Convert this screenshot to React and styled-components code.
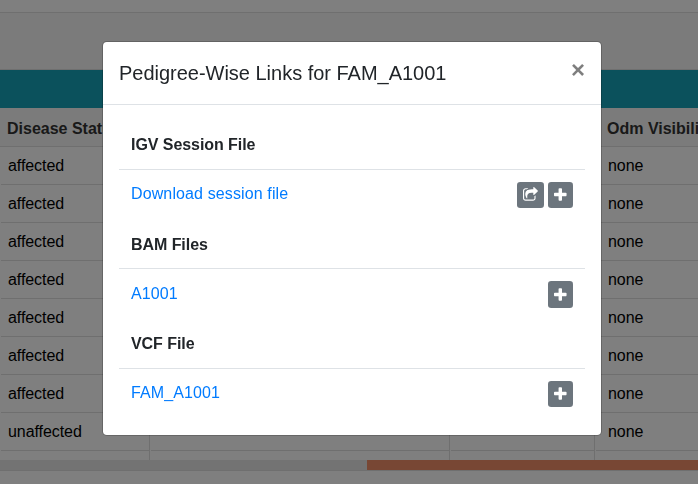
import React from "react";
import styled, { createGlobalStyle } from "styled-components";

const GlobalStyle = createGlobalStyle`
  *, *::before, *::after { box-sizing: border-box; }
  body {
    margin: 0;
    overflow: hidden;
    background: #fff;
    color: #212529;
    font: 16px/1.5 "Liberation Sans", Arial, sans-serif;
  }
`;

const Page = styled.main`
  height: 484px;
  overflow: hidden;
`;

const TopStrip = styled.div`
  height: 13px;
  border-bottom: 1px solid #dfdfdf;
`;

const Toolbar = styled.div`
  height: 57px;
  background: #f7f7f7;
  border-bottom: 1px solid #dedede;
`;

const GroupHeader = styled.div`
  height: 38px;
  background: #17a2b8;
`;

const GridRow = styled.div`
  display: grid;
  grid-template-columns: 150px 300px 145px 160px;
  height: ${(p) => p.$height || 38}px;
`;

const HeaderRow = styled(GridRow)`
  height: 39px;
  background: #f7f7f7;
  border-bottom: 1px solid #dedede;
`;

const HeaderCell = styled.div`
  padding: 9px 0 0 ${(p) => p.$indent || 7}px;
  font-weight: 700;
  color: #333;
  white-space: nowrap;
`;

const Cell = styled.div`
  position: relative;
  padding: 7px 0 0 ${(p) => p.$indent || 8}px;
  border-right: 1px solid #dedede;
  color: #000;
  letter-spacing: -0.07px;
  white-space: nowrap;

  &::after {
    content: "";
    position: absolute;
    left: 1px;
    right: 0;
    bottom: 0;
    height: ${(p) => (p.$last ? 0 : 1)}px;
    background: #dedede;
  }
`;

const ScrollTrack = styled.div`
  display: flex;
  justify-content: flex-end;
  height: 11px;
  background: #e6e6e6;
  border-bottom: 1px solid #dedede;
`;

const ScrollThumb = styled.div`
  width: 331px;
  background: #f08f69;
`;

const Backdrop = styled.div`
  position: fixed;
  inset: 0;
  background: rgba(0, 0, 0, 0.5);
`;

const Overlay = styled.div`
  position: fixed;
  inset: 0;
  display: flex;
  align-items: flex-start;
  padding: 41px 0 0 102px;
`;

const Dialog = styled.section`
  width: 500px;
  height: 395px;
  background: #fff;
  background-clip: padding-box;
  border: 1px solid rgba(0, 0, 0, 0.2);
  border-radius: 4.8px;
`;

const DialogHeader = styled.header`
  display: flex;
  justify-content: space-between;
  align-items: flex-start;
  height: 63px;
  padding: 16px;
  border-bottom: 1px solid #dee2e6;
`;

const Title = styled.h5`
  margin: 0;
  font-size: 20px;
  font-weight: 500;
  line-height: 30px;
  letter-spacing: -0.015px;
`;

const CloseButton = styled.button`
  margin: 0;
  padding: 0;
  border: 0;
  background: transparent;
  color: #000;
  opacity: 0.5;
  font: 700 24px/24px "Liberation Sans", Arial, sans-serif;
`;

const DialogBody = styled.div`
  padding: 15px 16px;
`;

const LinkSection = styled.section`
  height: ${(p) => (p.$tall ? 100 : 99)}px;
`;

const SectionTitle = styled.h6`
  height: 49px;
  margin: 0;
  padding: ${(p) => (p.$tall ? 14 : 13)}px 12px 0;
  font-size: 16px;
  font-weight: 700;
  line-height: 24px;
  letter-spacing: -0.06px;
`;

const LinkRow = styled.div`
  display: flex;
  align-items: flex-start;
  justify-content: space-between;
  padding: 12px 12px 0;
  border-top: 1px solid #dee2e6;
`;

const FileLink = styled.a`
  padding-top: ${(p) => (p.$tall ? 1 : 0)}px;
  color: #007bff;
  letter-spacing: 0.12px;
  text-decoration: none;
`;

const Actions = styled.div`
  display: flex;
  gap: 4px;
`;

const IconButton = styled.button`
  display: flex;
  align-items: center;
  justify-content: center;
  width: ${(p) => p.$width || 25}px;
  height: ${(p) => (p.$tall ? 27 : 26)}px;
  margin: 0;
  padding: 0;
  border: 0;
  border-radius: 3.2px;
  background: #6c757d;
  color: #fff;
`;

const Glyph = styled.svg`
  display: block;
  height: 16px;
  fill: currentColor;
`;

const PlusIcon = () => (
  <Glyph viewBox="192 0 1408 1792" width="12.57">
    <path d="M1600 736v192q0 40-28 68t-68 28h-416v416q0 40-28 68t-68 28h-192q-40 0-68-28t-28-68v-416h-416q-40 0-68-28t-28-68v-192q0-40 28-68t68-28h416v-416q0-40 28-68t68-28h192q40 0 68 28t28 68v416h416q40 0 68 28t28 68z" />
  </Glyph>
);

const ShareIcon = () => (
  <Glyph viewBox="0 0 1664 1792" width="14.86">
    <path d="M1408 989v259q0 119-84.5 203.5t-203.5 84.5h-832q-119 0-203.5-84.5t-84.5-203.5v-832q0-119 84.5-203.5t203.5-84.5h255q13 0 22.5 9.5t9.5 22.5q0 27-26 32-77 26-133 60-10 4-16 4h-112q-66 0-113 47t-47 113v832q0 66 47 113t113 47h832q66 0 113-47t47-113v-214q0-19 18-29 28-13 54-37 16-16 35-8 21 9 21 29zm237-496l-384 384q-18 19-45 19-12 0-25-5-39-17-39-59v-192h-160q-323 0-438 131-119 137-74 473 3 23-20 34-8 2-12 2-16 0-26-13-10-14-21-31t-39.5-68.5-49.5-99.5-38.5-114-17.5-122q0-49 3.5-91t14-90 28-88 47-81.5 68.5-74 94.5-61.5 124.5-48.5 159.5-30.5 196.5-11h160v-192q0-42 39-59 13-5 25-5 26 0 45 19l384 384q19 19 19 45t-19 45z" />
  </Glyph>
);

const statuses = ["affected", "affected", "affected", "affected", "affected", "affected", "affected", "unaffected"];

const sections = [
  { title: "IGV Session File", link: "Download session file", share: true },
  { title: "BAM Files", link: "A1001", tall: true },
  { title: "VCF File", link: "FAM_A1001" },
];

export default function App() {
  return (
    <>
      <GlobalStyle />
      <Page>
        <TopStrip />
        <Toolbar />
        <GroupHeader />
        <HeaderRow>
          <HeaderCell>Disease Status</HeaderCell>
          <HeaderCell />
          <HeaderCell />
          <HeaderCell $indent={12}>Odm Visibility</HeaderCell>
        </HeaderRow>
        {statuses.map((status, i) => (
          <GridRow key={i}>
            <Cell>{status}</Cell>
            <Cell />
            <Cell />
            <Cell $indent={13}>none</Cell>
          </GridRow>
        ))}
        <GridRow $height={9}>
          <Cell $last />
          <Cell $last />
          <Cell $last />
          <Cell $last />
        </GridRow>
        <ScrollTrack>
          <ScrollThumb />
        </ScrollTrack>
      </Page>
      <Backdrop />
      <Overlay>
        <Dialog role="dialog" aria-modal="true">
          <DialogHeader>
            <Title>Pedigree-Wise Links for FAM_A1001</Title>
            <CloseButton>×</CloseButton>
          </DialogHeader>
          <DialogBody>
            {sections.map(({ title, link, share, tall }) => (
              <LinkSection key={title} $tall={tall}>
                <SectionTitle $tall={tall}>{title}</SectionTitle>
                <LinkRow>
                  <FileLink $tall={tall}>{link}</FileLink>
                  <Actions>
                    {share && (
                      <IconButton $width={27}>
                        <ShareIcon />
                      </IconButton>
                    )}
                    <IconButton $tall={tall}>
                      <PlusIcon />
                    </IconButton>
                  </Actions>
                </LinkRow>
              </LinkSection>
            ))}
          </DialogBody>
        </Dialog>
      </Overlay>
    </>
  );
}
